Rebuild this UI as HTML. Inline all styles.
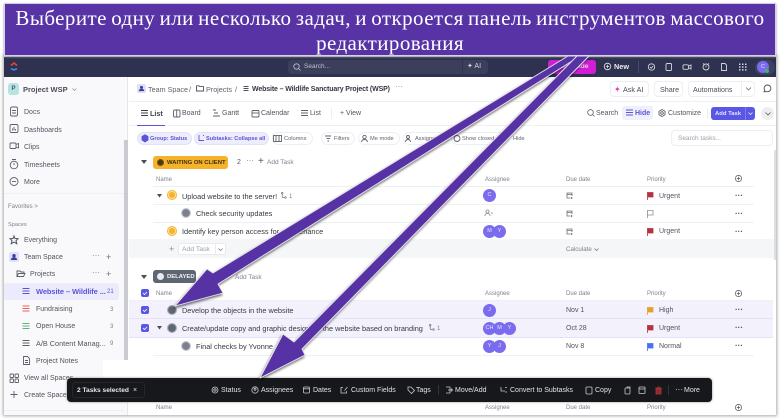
<!DOCTYPE html>
<html><head><meta charset="utf-8">
<style>
html,body{margin:0;padding:0;background:#fff}
#r{position:relative;width:780px;height:420px;overflow:hidden;background:#fff;font-family:"Liberation Sans",sans-serif}
#app{position:absolute;left:0;top:0;width:780px;height:420px;filter:blur(.38px)}
.b{position:absolute}
.t{position:absolute;white-space:nowrap;font-size:7px;line-height:10px;color:#4a4e57;margin-top:1px}
.s{color:#50555f;font-size:7px}
.g{color:#7d828c;font-size:6px}
.d{color:#363a42;font-size:7.35px;font-weight:400}
.w{color:#e2e3e7;font-size:7px;margin-top:1.500px}
.c{font-size:5.7px;color:#5f636d}
.cb{font-size:5.6px;color:#5b55d6;font-weight:700}
.av{position:absolute;width:13px;height:13px;border-radius:50%;background:#7b6bef;color:#e8e6ff;font-size:5.5px;line-height:13px;text-align:center}
.chip{position:absolute;top:132px;height:11px;border:1px solid #eceef1;border-radius:7px}
.chip.a{background:#eeedfc;border-color:#e2e0f9}
.ln{position:absolute;height:1px;background:#eff0f2}
svg{position:absolute;overflow:visible}
</style></head><body>
<div id="r">
<div id="app">
<!-- app frame -->
<div class="b" style="left:4px;top:56px;width:772px;height:359px;background:#fff;box-shadow:0 0 3px 1px #a9a9a9"></div>
<!-- top bar -->
<div class="b" style="left:4px;top:57px;width:772px;height:20px;background:#2e3150"></div>
<svg style="left:9px;top:61px" width="10" height="11" viewBox="0 0 10 11"><path d="M2 7.500q3 2.500 6 0" fill="none" stroke="#3f8cf0" stroke-width="1.600"/><path d="M2 4.500l3-2.500 3 2.500" fill="none" stroke="#e8452f" stroke-width="1.600"/></svg>
<div class="b" style="left:288px;top:60px;width:200px;height:14px;background:#3c3f5c;border-radius:4px"></div>
<svg style="left:293px;top:63px" width="8" height="8" viewBox="0 0 8 8"><circle cx="3.500" cy="3.500" r="2.700" fill="none" stroke="#c5c7d2" stroke-width=".8"/><path d="M5.500 5.500L7.500 7.500" stroke="#c5c7d2" stroke-width=".8"/></svg>
<div class="t" style="left:304px;top:61px;color:#bfc1cc;font-size:6.500px">Search...</div>
<div class="b" style="left:462px;top:60px;width:1px;height:14px;background:#2e3150"></div>
<div class="t" style="left:467px;top:61px;color:#d5d6de;font-size:7px">✦ AI</div>
<div class="b" style="left:548px;top:60px;width:48px;height:14px;background:#d01fd6;border-radius:3px"></div>
<div class="t" style="left:561px;top:61px;color:#f0c4f2;font-size:6.800px;font-weight:700">Upgrade</div>
<svg style="left:603px;top:62px" width="9" height="9" viewBox="0 0 9 9"><circle cx="4.500" cy="4.500" r="3.300" fill="none" stroke="#e5e6ec" stroke-width=".8"/><path d="M4.500 2.800v3.400M2.800 4.500h3.400" stroke="#e5e6ec" stroke-width=".8"/></svg>
<div class="t" style="left:614px;top:61px;color:#eceded;font-size:7.300px;font-weight:700">New</div>
<div class="b" style="left:638px;top:61px;width:1px;height:12px;background:#4a4d68"></div>
<svg style="left:647px;top:61px" width="118" height="12" viewBox="0 0 118 12" fill="none" stroke="#d3d4dd" stroke-width=".9"><circle cx="4.500" cy="6" r="3.200"/><path d="M3 6l1.200 1.200L6.200 5"/><rect x="19" y="2.500" width="5.500" height="7" rx="1"/><rect x="36" y="3.800" width="5.500" height="4.500" rx="1"/><path d="M42 5l2-1v4l-2-1"/><circle cx="59" cy="6" r="3"/><path d="M56 2.500l1.500 1M62 2.500l-1.500 1M59 4.500v1.700"/><path d="M74.500 2.500H78l1.500 1.500v5.500h-5z"/><g fill="#d3d4dd" stroke="none"><rect x="92" y="2.500" width="1.500" height="1.500"/><rect x="95" y="2.500" width="1.500" height="1.500"/><rect x="98" y="2.500" width="1.500" height="1.500"/><rect x="92" y="5.300" width="1.500" height="1.500"/><rect x="95" y="5.300" width="1.500" height="1.500"/><rect x="98" y="5.300" width="1.500" height="1.500"/><rect x="92" y="8.100" width="1.500" height="1.500"/><rect x="95" y="8.100" width="1.500" height="1.500"/><rect x="98" y="8.100" width="1.500" height="1.500"/></g></svg>
<div class="b" style="left:755px;top:60px;width:20px;height:15px;background:#3e4160;border-radius:8px"></div>
<div class="av" style="left:757px;top:61px;width:12px;height:12px;line-height:12px">C</div>
<div class="b" style="left:765px;top:69px;width:4px;height:4px;background:#3fb56f;border-radius:50%"></div>
<!-- sidebar -->
<div class="b" style="left:4px;top:77px;width:124px;height:338px;background:#f9f9fb;border-right:1px solid #e6e7ea;box-sizing:border-box"></div>
<div class="b" style="left:8px;top:83px;width:11px;height:12px;background:#b7e3e2;border-radius:3px;color:#3b5f60;font-size:6px;font-weight:700;line-height:12px;text-align:center">P</div>
<div class="t" style="left:23px;top:84px;font-size:7.500px;font-weight:700;color:#4c5059">Project WSP</div>
<svg style="left:72px;top:88px" width="5" height="3" viewBox="0 0 5 3" fill="none" stroke="#8a8e97" stroke-width=".7"><path d="M.5.500l2 2 2-2"/></svg>
<svg style="left:9px;top:106px" width="12" height="296" viewBox="0 0 12 296" fill="none" stroke="#5c606a" stroke-width=".9">
<rect x="1.500" y="1" width="7" height="9" rx="1.500"/><path d="M3 4.500h4M3 7h4"/>
<rect x="1" y="18.500" width="8" height="8" rx="1.500"/><path d="M3.500 24.500v-2M5 24.500v-3.500M6.500 24.500v-1.500"/>
<rect x="1" y="37" width="6" height="5.500" rx="1"/><path d="M7 38.500l2.500-1v4.500l-2.500-1"/>
<circle cx="5" cy="59" r="3.800"/><path d="M3 53.500h4M5 57v2.300"/>
<circle cx="5" cy="75.500" r="4"/><path d="M3 75.500h4"/>
<path d="M5 130l1 2.500 3 .2-2 2 .8 3-2.800-1.600-2.800 1.600.8-3-2-2 3-.2z" stroke="#4e535d" stroke-width="1"/>
<g transform="translate(0,267)"><rect x="1" y="1" width="3.500" height="3.500" rx=".8"/><rect x="6" y="1" width="3.500" height="3.500" rx=".8"/><rect x="1" y="6" width="3.500" height="3.500" rx=".8"/><rect x="6" y="6" width="3.500" height="3.500" rx=".8"/></g>
<path d="M5 285v7M1.500 288.500h7"/>
</svg>
<div class="t s" style="left:24px;top:107px">Docs</div>
<div class="t s" style="left:24px;top:124.500px">Dashboards</div>
<div class="t s" style="left:24px;top:142px">Clips</div>
<div class="t s" style="left:24px;top:159.500px">Timesheets</div>
<div class="t s" style="left:24px;top:176.500px">More</div>
<div class="ln" style="left:4px;top:193px;width:120px"></div>
<div class="t g" style="left:8px;top:201px">Favorites &gt;</div>
<div class="t g" style="left:8px;top:219px;font-size:5.600px">Spaces</div>
<div class="t s" style="left:24px;top:235px">Everything</div>
<div class="b" style="left:9px;top:252px;width:10px;height:10px;background:#dfe0fa;border-radius:2px"></div>
<svg style="left:10px;top:253px" width="8" height="8" viewBox="0 0 8 8"><circle cx="4" cy="2.700" r="1.700" fill="#3d3f9e"/><path d="M.8 7c.3-2 1.500-2.700 3.200-2.700S6.900 5 7.200 7z" fill="#3d3f9e"/></svg>
<div class="t s" style="left:24px;top:252px">Team Space</div>
<div class="t g" style="left:92px;top:250px;font-size:8px">···</div>
<div class="t g" style="left:106px;top:251px;font-size:9px;color:#6a6e77">+</div>
<svg style="left:16px;top:269px" width="10" height="9" viewBox="0 0 10 9" fill="none" stroke="#5c606a" stroke-width=".9"><path d="M1 7.500V2h3l1 1h3v1.500M1 7.500l1.500-3H9l-1.500 3z"/></svg>
<div class="t s" style="left:30px;top:269px">Projects</div>
<div class="t g" style="left:92px;top:267px;font-size:8px">···</div>
<div class="t g" style="left:106px;top:268px;font-size:9px;color:#6a6e77">+</div>
<div class="b" style="left:4px;top:283px;width:115px;height:17px;background:#ecebfb;border-radius:3px"></div>
<svg style="left:22px;top:287px" width="8" height="70" viewBox="0 0 8 70" fill="none" stroke-width="1"><path d="M.5 1.500h7M.5 4h7M.5 6.500h7" stroke="#5b55d6"/><path d="M.5 19h7M.5 21.500h7M.5 24h7" stroke="#e8615c"/><path d="M.5 36.500h7M.5 39h7M.5 41.500h7" stroke="#5cb57a"/><path d="M.5 53.500h7M.5 56h7M.5 58.500h7" stroke="#5c606a"/></svg>
<div class="t" style="left:36px;top:286px;font-size:7.500px;color:#5b55d6;font-weight:700;letter-spacing:-.1px">Website – Wildlife ...</div>
<div class="t g" style="left:107px;top:286px;color:#5b55d6">21</div>
<div class="t s" style="left:36px;top:304px">Fundraising</div><div class="t g" style="left:110px;top:304px">3</div>
<div class="t s" style="left:36px;top:321px">Open House</div><div class="t g" style="left:110px;top:321px">3</div>
<div class="t s" style="left:36px;top:338px;font-size:7.300px">A/B Content Manag...</div><div class="t g" style="left:110px;top:338px">9</div>
<svg style="left:23px;top:356px" width="7" height="9" viewBox="0 0 7 9" fill="none" stroke="#5c606a" stroke-width=".9"><path d="M.5.500h4l2 2v6H.5zM2 4.500h3M2 6.500h3"/></svg>
<div class="t s" style="left:36px;top:356px">Project Notes</div>
<div class="t s" style="left:24px;top:373px">View all Spaces</div>
<div class="t s" style="left:24px;top:390px">Create Space</div>
<div class="b" style="left:124px;top:140px;width:4px;height:220px;background:#c9cbd1"></div>
<div class="b" style="left:103px;top:360px;width:25px;height:18px;background:#fff"></div>
<div class="b" style="left:124px;top:378px;width:4px;height:10px;background:#c9cbd1"></div>
<div class="ln" style="left:4px;top:410px;width:120px"></div>
<!-- breadcrumb -->
<div class="ln" style="left:129px;top:101px;width:647px"></div>
<div class="b" style="left:137px;top:84px;width:9px;height:9px;background:#dfe0fa;border-radius:2px"></div>
<svg style="left:138px;top:85px" width="7" height="7" viewBox="0 0 8 8"><circle cx="4" cy="2.700" r="1.700" fill="#3d3f9e"/><path d="M.8 7c.3-2 1.500-2.700 3.200-2.700S6.900 5 7.200 7z" fill="#3d3f9e"/></svg>
<div class="t" style="left:148px;top:83.500px;font-size:7.200px;color:#5f636d">Team Space</div>
<div class="t" style="left:189px;top:83.500px;font-size:7.200px;color:#5f636d">/</div>
<svg style="left:196px;top:85px" width="8" height="7" viewBox="0 0 8 7" fill="none" stroke="#4e525c" stroke-width=".9"><path d="M.5 6V.8h2.500l.8.8h3.700V6z"/></svg>
<div class="t" style="left:206px;top:83.500px;font-size:7.200px;color:#5f636d">Projects</div>
<div class="t" style="left:235px;top:83.500px;font-size:7.200px;color:#5f636d">/</div>
<svg style="left:243px;top:85px" width="6" height="7" viewBox="0 0 6 7" stroke="#4e525c" stroke-width=".9"><path d="M.5 1.500h5M.5 3.500h5M.5 5.500h5"/></svg>
<div class="t" style="left:252px;top:83.500px;font-size:7px;color:#333740;font-weight:700;letter-spacing:-.13px">Website – Wildlife Sanctuary Project (WSP)</div>
<div class="t g" style="left:395px;top:81px;font-size:8px">···</div>
<div class="b" style="left:610px;top:81px;width:39px;height:16px;border:1px solid #eceef1;border-radius:4px;box-sizing:border-box"></div>
<div class="t" style="left:614px;top:83.500px;font-size:8px;color:#e03ac5">✦</div>
<div class="t" style="left:623px;top:83.500px;font-size:7.200px;color:#484c55">Ask AI</div>
<div class="b" style="left:654px;top:81px;width:29px;height:16px;border:1px solid #eceef1;border-radius:4px;box-sizing:border-box"></div>
<div class="t" style="left:660px;top:83.500px;font-size:7.200px;color:#484c55">Share</div>
<div class="b" style="left:688px;top:81px;width:67px;height:16px;border:1px solid #eceef1;border-radius:4px;box-sizing:border-box"></div>
<div class="b" style="left:741px;top:81px;width:1px;height:16px;background:#eceef1"></div>
<div class="t" style="left:693px;top:83.500px;font-size:7.100px;color:#484c55">Automations</div>
<svg style="left:745px;top:87px" width="7" height="4" viewBox="0 0 7 4" fill="none" stroke="#6a6e77" stroke-width=".8"><path d="M1 .5l2.500 2.500L6 .5"/></svg>
<svg style="left:763px;top:84px" width="9" height="9" viewBox="0 0 9 9" fill="none" stroke="#4e525c" stroke-width=".9"><path d="M4.500 1a3.400 3.300 0 1 1-.1 6.700H1L2 6.500A3.400 3.300 0 0 1 4.500 1z"/></svg>
<!-- tabs -->
<div class="ln" style="left:129px;top:125px;width:647px"></div>
<div class="b" style="left:137px;top:125px;width:28px;height:1px;background:#5b55d6"></div>
<svg style="left:141px;top:109px" width="230" height="9" viewBox="0 0 230 9" fill="none" stroke="#5c606a" stroke-width=".9"><path d="M0 1.500h7M0 4h7M0 6.500h7" stroke="#383c44"/><rect x="32.500" y="1" width="6.500" height="7" rx="1"/><path d="M35.700 1v7"/><path d="M72 1h3M73 4h4M72 7h7"/><rect x="111" y="1.500" width="7" height="6.500" rx="1"/><path d="M111 4h7"/><path d="M160 1.500h7M160 4h7M160 6.500h7"/></svg>
<div class="t" style="left:150px;top:108px;font-size:7.200px;font-weight:700;color:#3a3e47">List</div>
<div class="t s" style="left:182px;top:108px">Board</div>
<div class="t s" style="left:222px;top:108px">Gantt</div>
<div class="t s" style="left:261px;top:108px">Calendar</div>
<div class="t s" style="left:310px;top:108px">List</div>
<div class="b" style="left:331px;top:108px;width:1px;height:11px;background:#eceef1"></div>
<div class="t s" style="left:340px;top:108px">+ View</div>
<svg style="left:587px;top:109px" width="8" height="8" viewBox="0 0 8 8" fill="none" stroke="#5c606a" stroke-width=".8"><circle cx="3.500" cy="3.500" r="2.800"/><path d="M5.500 5.500l2 2"/></svg>
<div class="t s" style="left:596px;top:108px">Search</div>
<div class="b" style="left:622px;top:106px;width:31px;height:14px;background:#f0effc;border-radius:3px"></div>
<svg style="left:626px;top:109px" width="7" height="7" viewBox="0 0 7 7" stroke="#5b55d6" stroke-width=".9"><path d="M0 1h7M0 3.500h7M0 6h7"/></svg>
<div class="t" style="left:635px;top:108px;font-size:7px;color:#5b55d6;font-weight:700">Hide</div>
<svg style="left:658px;top:109px" width="8" height="8" viewBox="0 0 8 8" fill="none" stroke="#5c606a" stroke-width=".9"><circle cx="4" cy="4" r="1.300"/><path d="M4 .5l3 1.700v3.600L4 7.500 1 5.800V2.200z"/></svg>
<div class="t s" style="left:668px;top:108px">Customize</div>
<div class="b" style="left:707px;top:108px;width:1px;height:11px;background:#eceef1"></div>
<div class="b" style="left:711px;top:107px;width:44px;height:13px;background:#5b57e6;border-radius:3px"></div>
<div class="b" style="left:745px;top:107px;width:1px;height:13px;background:#7d7aee"></div>
<div class="t" style="left:715px;top:108px;font-size:5.900px;font-weight:700;color:#e5e4fb">Add Task</div>
<svg style="left:748px;top:112px" width="5" height="3" viewBox="0 0 5 3" fill="none" stroke="#e5e4fb" stroke-width=".8"><path d="M.5.500L2.500 2.500 4.500.500"/></svg>
<div class="b" style="left:761px;top:107px;width:13px;height:13px;background:#eceef1;border-radius:50%"></div>
<svg style="left:765px;top:112px" width="6" height="4" viewBox="0 0 6 4" fill="none" stroke="#5c606a" stroke-width=".8"><path d="M.5.500L3 3 5.500.500"/></svg>
<!-- toolbar -->
<div class="chip a" style="left:137px;width:53px"></div>
<div class="chip a" style="left:194px;width:73px"></div>
<div class="chip" style="left:272px;width:39px"></div>
<div class="chip" style="left:321px;width:32px"></div>
<div class="chip" style="left:358px;width:40px"></div>
<div class="chip" style="left:403px;width:44px"></div>
<div class="chip" style="left:451px;width:56px"></div>
<div class="t cb" style="left:150px;top:133px">Group: Status</div>
<div class="t cb" style="left:206px;top:133px">Subtasks: Collapse all</div>
<div class="t c" style="left:284px;top:133px">Columns</div>
<div class="t c" style="left:334px;top:133px">Filters</div>
<div class="t c" style="left:370px;top:133px">Me mode</div>
<div class="t c" style="left:415px;top:133px">Assignee</div>
<div class="t c" style="left:462px;top:133px">Show closed</div>
<div class="t c" style="left:513px;top:133px">Hide</div>
<svg style="left:141px;top:134px" width="390" height="9" viewBox="0 0 390 9" fill="none" stroke-width=".9"><path d="M4 .8l3 1.700v3.500L4 8 1 6V2.500z" fill="#5b55d6" stroke="#5b55d6"/><path d="M58 1v5.500h4M62 1.500h1M62 6.500h1" stroke="#5b55d6"/><rect x="132.500" y="1.500" width="8" height="6" stroke="#5f636d"/><path d="M135 1.500v6M138 1.500v6" stroke="#5f636d"/><path d="M184 2h6M185.500 4.500h3.500M186.500 7h1.500" stroke="#5f636d"/><circle cx="223.500" cy="3" r="1.700" stroke="#5f636d"/><path d="M220.500 8c.3-2 1.500-2.500 3-2.500s2.700.5 3 2.500" stroke="#5f636d"/><circle cx="267" cy="3" r="1.500" stroke="#5f636d"/><path d="M264.500 8c.2-2 1.300-2.500 2.500-2.500s2.300.5 2.500 2.500" stroke="#5f636d"/><circle cx="316" cy="4.500" r="3" stroke="#5f636d"/></svg>
<div class="b" style="left:671px;top:130px;width:102px;height:16px;border:1px solid #eceef1;border-radius:4px;box-sizing:border-box"></div>
<div class="t" style="left:678px;top:132.500px;font-size:6.500px;color:#9a9ea7">Search tasks...</div>
<!-- right scrollbar -->
<div class="b" style="left:774px;top:150px;width:2px;height:110px;background:#dedfe3"></div>
<!-- group 1 -->
<svg style="left:141px;top:160px" width="6" height="4"><path d="M0 0h6L3 4z" fill="#4a4e57"/></svg>
<div class="b" style="left:153px;top:156px;width:75px;height:13px;background:#f4b32b;border-radius:3px"></div>
<div class="b" style="left:157px;top:159px;width:7px;height:7px;border-radius:50%;background:#4a3a12;border:1px solid #6d5518;box-sizing:border-box"></div>
<div class="t" style="left:167px;top:156.500px;font-size:5.900px;color:#3f310e;font-weight:700">WAITING ON CLIENT</div>
<div class="t s" style="left:237px;top:156.500px">2</div>
<div class="t g" style="left:246px;top:154.500px;font-size:8px">···</div>
<div class="t" style="left:258px;top:155.500px;font-size:10px;color:#4e525c">+</div>
<div class="t g" style="left:267px;top:157px;font-size:6.500px">Add Task</div>
<div class="t g" style="left:156px;top:174px">Name</div>
<div class="t g" style="left:485px;top:174px">Assignee</div>
<div class="t g" style="left:566px;top:174px">Due date</div>
<div class="t g" style="left:647px;top:174px">Priority</div>
<svg style="left:735px;top:175px" width="7" height="7" viewBox="0 0 7 7" fill="none" stroke="#4e525c" stroke-width=".7"><circle cx="3.500" cy="3.500" r="3.100"/><path d="M3.500 1.800v3.400M1.800 3.500h3.400"/></svg>
<div class="ln" style="left:153px;top:186px;width:601px"></div>
<div class="ln" style="left:153px;top:204px;width:601px"></div>
<div class="ln" style="left:153px;top:222px;width:601px"></div>
<svg style="left:157px;top:194px" width="6" height="4"><path d="M0 0h5L2.500 3.500z" fill="#4a4e57"/></svg>
<div class="b" style="left:168px;top:191px;width:8px;height:8px;border-radius:50%;background:#f4b32b;border:1px solid #fbdf9f;outline:1px solid #f4b32b;outline-offset:0;box-sizing:border-box"></div>
<div class="t d" style="left:182px;top:190.500px">Upload website to the server!</div>
<svg style="left:281px;top:192px" width="6" height="7" viewBox="0 0 6 7" fill="none" stroke="#6a6e77" stroke-width=".7"><circle cx="1.200" cy="1.200" r=".8"/><path d="M1.200 2v2.500q0 1 1 1h1"/><circle cx="4.500" cy="5.500" r=".8"/></svg>
<div class="t g" style="left:289px;top:190.500px">1</div>
<div class="b" style="left:182px;top:209px;width:8px;height:8px;border-radius:50%;background:#7c8190;outline:1px solid #c5c8d0;box-sizing:border-box"></div>
<div class="t d" style="left:196px;top:208px">Check security updates</div>
<div class="b" style="left:168px;top:227px;width:8px;height:8px;border-radius:50%;background:#f4b32b;border:1px solid #fbdf9f;outline:1px solid #f4b32b;box-sizing:border-box"></div>
<div class="t d" style="left:182px;top:226px">Identify key person access for maintenance</div>
<div class="av" style="left:483px;top:189px">C</div>
<svg style="left:484px;top:209px" width="9" height="8" viewBox="0 0 9 8" fill="none" stroke="#8a8e97" stroke-width=".8"><circle cx="3.500" cy="2.500" r="1.600"/><path d="M.8 7c.2-2 1.300-2.500 2.700-2.500S6 5 6.200 7M8 3v2"/></svg>
<div class="av" style="left:483px;top:225px">M</div><div class="av" style="left:493px;top:225px">Y</div>
<svg style="left:566px;top:191px" width="7" height="44" viewBox="0 0 7 44" fill="none" stroke="#6a6e77" stroke-width=".8"><path d="M6 5V2H1v5h3M1 3.500h5M5.500 6v2M4.500 7h2"/><path d="M6 23V20H1v5h3M1 21.500h5M5.500 24v2M4.500 25h2"/><path d="M6 41V38H1v5h3M1 39.500h5M5.500 42v2M4.500 43h2"/></svg>
<svg style="left:647px;top:192px" width="7" height="44" viewBox="0 0 7 44"><path d="M.5 0v8M.5 .5h5.500v4.500H.5z" fill="#b3343f" stroke="#b3343f" stroke-width=".8"/><path d="M.5 18v8M.5 18.500h5.500v4.500H.5z" fill="none" stroke="#8a8e97" stroke-width=".8"/><path d="M.5 36v8M.5 36.500h5.500v4.500H.5z" fill="#b3343f" stroke="#b3343f" stroke-width=".8"/></svg>
<div class="t s" style="left:659px;top:190.500px">Urgent</div>
<div class="t s" style="left:659px;top:226px">Urgent</div>
<div class="t" style="left:735px;top:189.500px;font-size:8px;color:#4a4e57;font-weight:700">···</div>
<div class="t" style="left:735px;top:207.500px;font-size:8px;color:#4a4e57;font-weight:700">···</div>
<div class="t" style="left:735px;top:225.500px;font-size:8px;color:#4a4e57;font-weight:700">···</div>
<div class="b" style="left:129px;top:239px;width:645px;height:19px;background:#f5f6f8"></div>
<div class="t" style="left:169px;top:242.500px;font-size:9px;color:#8a8e97">+</div>
<div class="b" style="left:178px;top:243px;width:48px;height:12px;background:#fff;border:1px solid #e9eaed;border-radius:2px;box-sizing:border-box"></div>
<div class="b" style="left:215px;top:243px;width:1px;height:12px;background:#e9eaed"></div>
<div class="t" style="left:182px;top:243.500px;font-size:6.800px;color:#9a9ea7">Add Task</div>
<svg style="left:218px;top:248px" width="5" height="3" viewBox="0 0 5 3" fill="none" stroke="#6a6e77" stroke-width=".7"><path d="M.5.500l2 2 2-2"/></svg>
<div class="t g" style="left:566px;top:243.500px;font-size:6.200px">Calculate</div>
<svg style="left:594px;top:248px" width="5" height="3" viewBox="0 0 5 3" fill="none" stroke="#6a6e77" stroke-width=".7"><path d="M.5.500l2 2 2-2"/></svg>
<!-- group 2 -->
<svg style="left:141px;top:275px" width="6" height="4"><path d="M0 0h6L3 4z" fill="#4a4e57"/></svg>
<div class="b" style="left:153px;top:270px;width:43px;height:13px;background:#5f6673;border-radius:3px"></div>
<div class="b" style="left:157px;top:273px;width:7px;height:7px;border-radius:50%;background:#e9eaed"></div>
<div class="t" style="left:167px;top:270.500px;font-size:5.900px;color:#f2f2f3;font-weight:700">DELAYED</div>
<div class="t g" style="left:235px;top:271.500px;font-size:6.500px">Add Task</div>
<div class="b" style="left:141px;top:289px;width:8px;height:8px;background:#5b57e6;border-radius:2px"></div>
<div class="t g" style="left:156px;top:288px">Name</div>
<div class="t g" style="left:485px;top:288px">Assignee</div>
<div class="t g" style="left:566px;top:288px">Due date</div>
<div class="t g" style="left:647px;top:288px">Priority</div>
<svg style="left:735px;top:289.500px" width="7" height="7" viewBox="0 0 7 7" fill="none" stroke="#4e525c" stroke-width=".7"><circle cx="3.500" cy="3.500" r="3.100"/><path d="M3.500 1.800v3.400M1.800 3.500h3.400"/></svg>
<div class="b" style="left:129px;top:301px;width:644px;height:17px;background:#f2f1fc"></div>
<div class="b" style="left:129px;top:319px;width:644px;height:18px;background:#f2f1fc"></div>
<div class="ln" style="left:129px;top:318px;width:644px;background:#e4e2f8"></div>
<div class="ln" style="left:129px;top:300px;width:644px;background:#eeedf8"></div>
<div class="ln" style="left:129px;top:337px;width:644px;background:#e4e2f8"></div>
<div class="ln" style="left:153px;top:355px;width:601px"></div>
<svg style="left:141px;top:306px" width="8" height="26" viewBox="0 0 8 26"><rect width="8" height="8" rx="2" fill="#5b57e6"/><path d="M2 4l1.500 1.500L6 3" fill="none" stroke="#fff" stroke-width=".8"/><rect y="18" width="8" height="8" rx="2" fill="#5b57e6"/><path d="M2 22l1.500 1.500L6 21" fill="none" stroke="#fff" stroke-width=".8"/></svg>
<svg style="left:141px;top:291px" width="8" height="4"><path d="M2 2l1.500 1.500L6 1" fill="none" stroke="#fff" stroke-width=".8"/></svg>
<svg style="left:157px;top:326px" width="6" height="4"><path d="M0 0h5L2.500 3.500z" fill="#4a4e57"/></svg>
<div class="b" style="left:168px;top:306px;width:8px;height:8px;border-radius:50%;background:#5f6673;outline:1px solid #a9adb6;box-sizing:border-box"></div>
<div class="t d" style="left:182px;top:304.500px">Develop the objects in the website</div>
<div class="b" style="left:168px;top:324px;width:8px;height:8px;border-radius:50%;background:#5f6673;outline:1px solid #a9adb6;box-sizing:border-box"></div>
<div class="t d" style="left:182px;top:322.500px">Create/update copy and graphic design for the website based on branding</div>
<svg style="left:429px;top:324px" width="6" height="7" viewBox="0 0 6 7" fill="none" stroke="#6a6e77" stroke-width=".7"><circle cx="1.200" cy="1.200" r=".8"/><path d="M1.200 2v2.500q0 1 1 1h1"/><circle cx="4.500" cy="5.500" r=".8"/></svg>
<div class="t g" style="left:437px;top:322.500px">1</div>
<div class="b" style="left:182px;top:342px;width:8px;height:8px;border-radius:50%;background:#7c8190;outline:1px solid #c5c8d0;box-sizing:border-box"></div>
<div class="t d" style="left:196px;top:340.500px">Final checks by Yvonne</div>
<div class="av" style="left:483px;top:304px">J</div>
<div class="av" style="left:483px;top:322px">CH</div><div class="av" style="left:493px;top:322px">M</div><div class="av" style="left:503px;top:322px">Y</div>
<div class="av" style="left:483px;top:340px">Y</div><div class="av" style="left:493px;top:340px">J</div>
<div class="t s" style="left:566px;top:304.500px">Nov 1</div>
<div class="t s" style="left:566px;top:322.500px">Oct 28</div>
<div class="t s" style="left:566px;top:340.500px">Nov 8</div>
<svg style="left:647px;top:307px" width="7" height="44" viewBox="0 0 7 44"><path d="M.5 0v8M.5 .5h5.500v4.500H.5z" fill="#e2a22c" stroke="#e2a22c" stroke-width=".8"/><path d="M.5 18v8M.5 18.500h5.500v4.500H.5z" fill="#b3343f" stroke="#b3343f" stroke-width=".8"/><path d="M.5 36v8M.5 36.500h5.500v4.500H.5z" fill="#4c6ef0" stroke="#4c6ef0" stroke-width=".8"/></svg>
<div class="t s" style="left:659px;top:304.500px">High</div>
<div class="t s" style="left:659px;top:322.500px">Urgent</div>
<div class="t s" style="left:659px;top:340.500px">Normal</div>
<div class="t" style="left:735px;top:304px;font-size:8px;font-weight:700">···</div>
<div class="t" style="left:735px;top:322px;font-size:8px;font-weight:700">···</div>
<div class="t" style="left:735px;top:340px;font-size:8px;font-weight:700">···</div>
<!-- bottom header -->
<div class="t g" style="left:156px;top:402px">Name</div>
<div class="t g" style="left:485px;top:402px">Assignee</div>
<div class="t g" style="left:566px;top:402px">Due date</div>
<div class="t g" style="left:647px;top:402px">Priority</div>
<svg style="left:735px;top:404px" width="7" height="7" viewBox="0 0 7 7" fill="none" stroke="#4e525c" stroke-width=".7"><circle cx="3.500" cy="3.500" r="3.100"/><path d="M3.500 1.800v3.400M1.800 3.500h3.400"/></svg>
<!-- bulk bar -->
<div class="b" style="left:67px;top:378px;width:645px;height:24px;background:#17181c;border-radius:4px;box-shadow:0 0 2px #888"></div>
<div class="b" style="left:72px;top:382px;width:73px;height:16px;border:1px solid #26272c;border-radius:3px;box-sizing:border-box"></div>
<div class="t" style="left:77px;top:384.500px;font-size:6.600px;color:#e6e7ea;font-weight:700">2 Tasks selected</div>
<div class="t w" style="left:133px;top:384px">×</div>
<svg style="left:211px;top:385px" width="480" height="10" viewBox="0 0 480 10" fill="none" stroke="#c7c8ce" stroke-width=".8"><circle cx="4" cy="5" r="3"/><circle cx="4" cy="5" r="1.200"/><circle cx="44" cy="5" r="3.200"/><circle cx="44" cy="4.200" r="1"/><rect x="92.500" y="2" width="6" height="6" rx="1"/><path d="M92.500 3.800h6"/><path d="M132 2.500h-2v5.500h5.500v-2M133.500 5.500L136.500 2"/><path d="M197 2h3l3.500 3.500-3 3L197 5z"/><path d="M235 2h4v6h-4M237 5h4M240 3.500l1.500 1.500-1.500 1.500"/><path d="M290 2v4h4M294 2.500h2M294 7h2"/><rect x="375" y="2" width="6" height="7" rx="1"/><rect x="414" y="3" width="5" height="6" rx="1"/><path d="M416 3V2h3v1"/><rect x="428" y="2" width="6" height="6.500" rx=".5"/><path d="M428 4h6"/></svg>
<svg style="left:655px;top:386px" width="7" height="9" viewBox="0 0 7 9" fill="#8c2a30" stroke="#b3343f" stroke-width=".8"><path d="M1 2.500h5V8H1zM.2 2h6.600M2.500 1h2"/></svg>
<div class="t w" style="left:221px;top:384px">Status</div>
<div class="t w" style="left:261px;top:384px">Assignees</div>
<div class="t w" style="left:313px;top:384px">Dates</div>
<div class="t w" style="left:351px;top:384px">Custom Fields</div>
<div class="b" style="left:438px;top:385px;width:1px;height:10px;background:#33343a"></div>
<div class="t w" style="left:416px;top:384px">Tags</div>
<div class="t w" style="left:455px;top:384px">Move/Add</div>
<div class="t w" style="left:510px;top:384px">Convert to Subtasks</div>
<div class="t w" style="left:595px;top:384px">Copy</div>
<div class="b" style="left:668px;top:385px;width:1px;height:10px;background:#33343a"></div>
<div class="t w" style="left:675px;top:383px;font-size:8px">···</div>
<div class="t w" style="left:684px;top:384px">More</div>
</div>
<!-- header banner -->
<div class="b" style="left:4px;top:3px;width:772px;height:53px;background:#5733a5;border:1px solid #d6cfea;box-sizing:border-box;box-shadow:0 1px 2px #8a8a8a"></div>
<div class="b" style="left:4px;top:6px;width:772px;text-align:center;font-family:'Liberation Serif',serif;font-size:21px;line-height:25px;color:#fff;letter-spacing:.42px;word-spacing:-1.3px;filter:blur(.3px)">Выберите одну или несколько задач, и откроется панель инструментов массового<br>редактирования</div>
<!-- arrows -->
<svg style="left:0;top:0" width="780" height="420" viewBox="0 0 780 420">
<defs><filter id="sh" x="-10%" y="-10%" width="120%" height="120%"><feDropShadow dx="-1" dy="2" stdDeviation="1.200" flood-color="#000" flood-opacity=".6"/></filter></defs>
<g filter="url(#sh)" fill="#5733a5" stroke="#e4e1ea" stroke-width=".9" stroke-linejoin="round">
<path d="M568 56L580 56L218 284L223 293L175 306L207 269L213 273Z"/>
<path d="M577 56L589 56L302 349L305 355L260 378L283 334L294 342Z"/>
</g>
</svg>
</div>
</body></html>
